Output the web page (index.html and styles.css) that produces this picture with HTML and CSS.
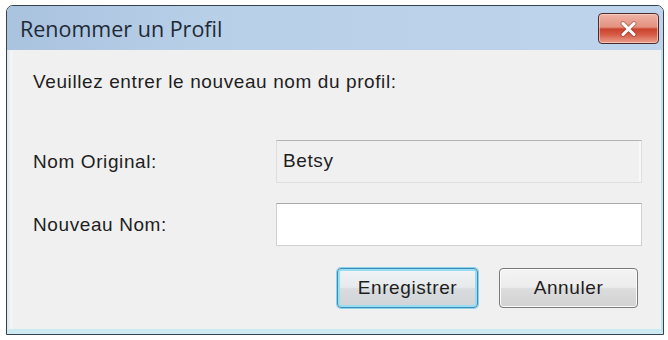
FILE: index.html
```html
<!DOCTYPE html>
<html lang="fr">
<head>
<meta charset="utf-8">
<title>Renommer un Profil</title>
<link rel="stylesheet" href="styles.css">
</head>
<body>
<div class="window">
  <div class="titlebar">
    <span class="title">Renommer un Profil</span>
    <button class="close" aria-label="Fermer">
      <svg width="17" height="16" viewBox="0 0 17 16">
        <path d="M3 2.5 L14 13.5 M14 2.5 L3 13.5" stroke="#7a2a20" stroke-opacity="0.35" stroke-width="5" stroke-linecap="round"/>
        <path d="M3 2.5 L14 13.5 M14 2.5 L3 13.5" stroke="#ffffff" stroke-width="3" stroke-linecap="round"/>
      </svg>
    </button>
  </div>
  <div class="frame">
    <div class="client">
      <p class="prompt">Veuillez entrer le nouveau nom du profil:</p>
      <div class="form">
        <div class="row">
          <span class="label">Nom Original:</span>
          <div class="field readonly">Betsy</div>
        </div>
        <div class="row">
          <span class="label">Nouveau Nom:</span>
          <div class="field"></div>
        </div>
      </div>
      <div class="buttons">
        <button class="btn default">Enregistrer</button>
        <button class="btn">Annuler</button>
      </div>
    </div>
  </div>
</div>
</body>
</html>
```

FILE: styles.css
```css
html, body {
  margin: 0;
  padding: 0;
  background: #ffffff;
}

body {
  width: 668px;
  height: 340px;
  overflow: hidden;
  font-family: "Liberation Sans", Arial, sans-serif;
  color: #1e1e1e;
}

.window {
  box-sizing: border-box;
  width: 658px;
  height: 330px;
  margin: 5px 0 0 6px;
  border: 1px solid #34434f;
  border-radius: 7px 7px 0 0;
  overflow: hidden;
  display: flex;
  flex-direction: column;
  background: #e9eef1;
}

.titlebar {
  height: 44px;
  flex: none;
  display: flex;
  align-items: center;
  justify-content: space-between;
  padding-left: 13px;
  padding-right: 4px;
  background: linear-gradient(to right, #a9c2de 0%, #b8cfe8 30%, #bed4ec 100%);
}

.title {
  font-family: "Open Sans", "Noto Sans", sans-serif;
  font-size: 21.5px;
  color: #1f2a36;
}

.close {
  width: 61px;
  height: 31px;
  padding: 0;
  margin: 1px 0 0 0;
  border: 1px solid #4a2c2c;
  border-radius: 4px;
  background: linear-gradient(to bottom, #eeb3a6 0%, #e3917e 45%, #c9432e 52%, #d65a44 70%, #e9a08e 100%);
  box-shadow: inset 0 0 0 1px rgba(255, 220, 210, 0.6);
  display: flex;
  align-items: center;
  justify-content: center;
}

.frame {
  flex: 1;
  display: flex;
  padding: 0 1px 2px 6px;
  background: linear-gradient(to right, #dde3e7 0px, #f6f6f6 4px, #eef2f4 6px);
  border-right: 2px solid #bfe1ec;
  border-bottom: 5px solid #cde9f1;
}

.client {
  flex: 1;
  background: #f0f0f0;
  padding: 22px 18px 0 20px;
  display: flex;
  flex-direction: column;
}

.prompt {
  margin: 0;
  font-size: 19px;
  letter-spacing: 0.6px;
  line-height: 20px;
}

.form {
  margin-top: 48px;
  display: flex;
  flex-direction: column;
  gap: 20px;
}

.row {
  display: flex;
  align-items: center;
}

.label {
  width: 243px;
  flex: none;
  font-size: 19px;
  letter-spacing: 0.6px;
  line-height: 20px;
}

.field {
  box-sizing: border-box;
  flex: 1;
  height: 43px;
  border: 1px solid #d2d2d2;
  border-top-color: #a9a9a9;
  background: #ffffff;
  font-size: 19px;
  letter-spacing: 0.6px;
  line-height: 20px;
  padding: 10px 6px 0;
}

.field.readonly {
  background: #f0f0f0;
  border-color: #dedede;
  border-top-color: #b4b4b4;
  box-shadow: inset -2px 0 0 #f8f8f8;
}

.buttons {
  margin-top: 22px;
  margin-right: 4px;
  display: flex;
  justify-content: flex-end;
  gap: 21px;
}

.btn {
  box-sizing: border-box;
  width: 139px;
  height: 40px;
  font-family: "Liberation Sans", Arial, sans-serif;
  font-size: 19px;
  letter-spacing: 0.6px;
  color: #1e1e1e;
  border: 1px solid #7a7a7a;
  border-radius: 4px;
  background: linear-gradient(to bottom, #f4f4f4 0%, #ececec 48%, #dcdcdc 52%, #d2d2d2 100%);
  box-shadow: inset 0 0 0 1px #fbfbfb;
  padding: 0;
}

.btn.default {
  width: 141px;
  border: 1px solid #3a8fb8;
  box-shadow: 0 0 0 1px #8fd0ea, inset 0 0 0 2px #9adcf2;
  background: linear-gradient(to bottom, #f0f4f6 0%, #e6eaec 48%, #d8dcde 52%, #d0d4d6 100%);
}
```
